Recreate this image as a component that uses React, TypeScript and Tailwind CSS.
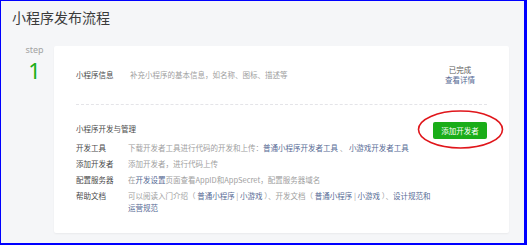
const font = { fontFamily: '"Noto Sans CJK SC", "Noto Sans", sans-serif' };

function A({ children }: { children: React.ReactNode }) {
  return <a className="text-[#576b95]">{children}</a>;
}

const rows = [
  {
    label: "开发工具",
    body: (
      <>
        下载开发者工具进行代码的开发和上传：<A>普通小程序开发者工具</A> 、 <A>小游戏开发者工具</A>
      </>
    ),
  },
  { label: "添加开发者", body: <>添加开发者，进行代码上传</> },
  {
    label: "配置服务器",
    body: (
      <>
        在<A>开发设置</A>页面查看AppID和AppSecret，配置服务器域名
      </>
    ),
  },
  {
    label: "帮助文档",
    body: (
      <>
        可以阅读入门介绍（ <A>普通小程序</A> | <A>小游戏</A> ）、开发文档（ <A>普通小程序</A> | <A>小游戏</A> ）、
        <A>设计规范和</A>
        <br />
        <A>运营规范</A>
      </>
    ),
  },
];

export default function App() {
  return (
    <div
      className="relative w-[527px] h-[245px] bg-[#f5f6f8] border-l border-t border-r-[3px] border-b-2 border-[#0000ff] overflow-hidden"
      style={font}
    >
      <div className="pl-[11px] pt-[6px] text-[14px] leading-[20px] text-[#3b3b3b]">小程序发布流程</div>

      <div className="flex mt-[19px]">
        <div className="w-[53px] flex flex-col items-center pl-[14px]">
          <div className="text-[9px] leading-[10px] text-[#a3a3a3] -mt-[1px]" style={{ fontFamily: '"Noto Sans", sans-serif' }}>
            step
          </div>
          <div className="text-[22px] leading-[22px] text-[#1aad19] mt-[4px]" style={{ fontFamily: '"Noto Sans", sans-serif' }}>
            1
          </div>
        </div>

        <div className="w-[455px] bg-white rounded-[2px] shadow-[0_1px_2px_rgba(0,0,0,0.05)] px-[22px] text-[7.5px] leading-[12px]">
          <div className="h-[59px] flex items-center border-b border-dashed border-[#e4e4e8]">
            <div className="w-[54px] text-[#4a4a4a]">小程序信息</div>
            <div className="flex-1 text-[#a0a0a0]">补充小程序的基本信息，如名称、图标、描述等</div>
            <div className="w-[54px] flex flex-col items-center leading-[10.5px]">
              <span className="text-[#5a5a5a]">已完成</span>
              <A>查看详情</A>
            </div>
          </div>

          <div className="pt-[17px] pb-[19px]">
            <div className="flex justify-between items-start">
              <div className="text-[#4a4a4a] leading-[13px]">小程序开发与管理</div>
              <button className="w-[54px] h-[17px] bg-[#1aad19] text-white rounded-[2px] text-[7.5px]">添加开发者</button>
            </div>
            <div className="mt-[3px] flex flex-col gap-[4px]">
              {rows.map((r) => (
                <div key={r.label} className="flex">
                  <div className="w-[52px] shrink-0 text-[#4a4a4a]">{r.label}</div>
                  <div className="text-[#a0a0a0]">{r.body}</div>
                </div>
              ))}
            </div>
          </div>
        </div>
      </div>

      <svg className="absolute left-[416px] top-[109px]" width="88" height="40" viewBox="0 0 88 40">
        <ellipse cx="43.5" cy="19.5" rx="42" ry="18.5" fill="none" stroke="#e0161b" strokeWidth="1.6" />
      </svg>
    </div>
  );
}
